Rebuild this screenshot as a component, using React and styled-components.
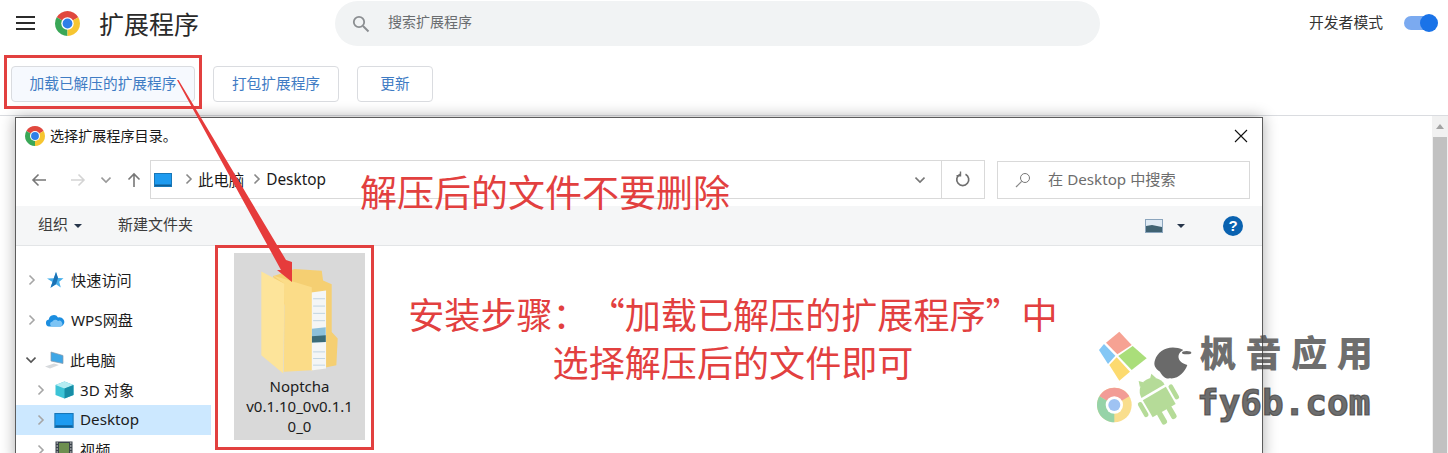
import React from 'react';
import styled, { createGlobalStyle } from 'styled-components';

const CJK = `"Noto Sans CJK SC", "Noto Sans", sans-serif`;
const LATIN = `"Noto Sans", "Noto Sans CJK SC", sans-serif`;
const RED = '#e2403f';

const GlobalStyle = createGlobalStyle`
  html, body { margin: 0; padding: 0; background: #fff; }
  body { width: 1448px; height: 453px; overflow: hidden; font-family: ${CJK}; }
`;

const Page = styled.div`
  position: relative;
  width: 1448px;
  height: 453px;
  overflow: hidden;
  background: #fff;
`;

const Header = styled.header`
  display: flex;
  align-items: center;
  height: 46px;
  padding: 0 10px 0 16px;
`;

const Burger = styled.div`
  display: flex;
  flex-direction: column;
  gap: 3.5px;
  width: 19px;
  margin-right: 20px;
  i { display: block; height: 2.5px; background: #2b2b2b; }
`;

const Title = styled.h1`
  margin: 0 0 0 19px;
  width: 236px;
  font-size: 25px;
  font-weight: 400;
  color: #2a2a2a;
  white-space: nowrap;
`;

const SearchPill = styled.div`
  display: flex;
  align-items: center;
  width: 765px;
  height: 45px;
  margin-top: 1px;
  padding-left: 17px;
  box-sizing: border-box;
  background: #f1f3f4;
  border-radius: 23px;
  font-size: 14px;
  color: #6a6d70;
  span { margin: -6px 0 0 18px; }
`;

const DevMode = styled.div`
  display: flex;
  align-items: center;
  margin-left: 209px;
  font-size: 14.8px;
  color: #333;
  white-space: nowrap;
  span { margin-top: -4px; }
`;

const Toggle = styled.div`
  position: relative;
  width: 26px;
  height: 14px;
  margin-left: 21px;
  background: #7baaf0;
  border-radius: 7px;
  &::after {
    content: '';
    position: absolute;
    left: 16px;
    top: -2px;
    width: 18px;
    height: 18px;
    border-radius: 50%;
    background: #1a73e8;
  }
`;

const Toolbar = styled.div`
  display: flex;
  align-items: center;
  gap: 18px;
  height: 70px;
  padding: 7px 0 0 11px;
  box-sizing: border-box;
  border-bottom: 1px solid #dadce0;
`;

const ActionButton = styled.div`
  display: flex;
  align-items: center;
  justify-content: center;
  width: ${p => p.$w}px;
  height: 36px;
  padding-bottom: 4px;
  box-sizing: border-box;
  border: 1px solid #dadce0;
  border-radius: 4px;
  background: ${p => (p.$active ? '#f6f9fe' : '#fff')};
  color: #3f7cc4;
  font-size: 14.7px;
  white-space: nowrap;
`;

const Scrollbar = styled.div`
  position: absolute;
  right: 0;
  top: 116px;
  bottom: 0;
  width: 16px;
  display: flex;
  flex-direction: column;
  align-items: center;
  background: #f1f1f1;
  &::before {
    content: '';
    margin: 8px 0 8px;
    border-left: 4px solid transparent;
    border-right: 4px solid transparent;
    border-bottom: 5px solid #a3a3a3;
  }
  &::after {
    content: '';
    flex: 1;
    width: 14px;
    background: #c1c1c1;
  }
`;

const Dialog = styled.section`
  position: absolute;
  left: 15px;
  top: 117px;
  width: 1248px;
  height: 345px;
  box-sizing: border-box;
  background: #fff;
  border: 1px solid #5c5c5c;
  box-shadow: 0 0 14px rgba(0, 0, 0, 0.32);
  display: flex;
  flex-direction: column;
`;

const DialogTitle = styled.div`
  display: flex;
  align-items: center;
  height: 36px;
  padding: 0 14px 0 9px;
  font-size: 14.1px;
  color: #1a1a1a;
  span { margin: -2px 0 0 5px; flex: 1; }
`;

const AddressRow = styled.div`
  display: flex;
  align-items: center;
  height: 39px;
  margin-top: 6px;
  padding-left: 15px;
`;

const NavIcons = styled.div`
  display: flex;
  align-items: center;
  width: 119px;
`;

const Spacer = styled.div`
  width: ${p => p.$w}px;
  flex-shrink: 0;
`;

const AddressBox = styled.div`
  display: flex;
  align-items: center;
  width: 835px;
  height: 39px;
  box-sizing: border-box;
  border: 1px solid #d9d9d9;
  font-family: ${LATIN};
  font-size: 15.4px;
  color: #1a1a1a;
  padding-left: 3px;
`;

const Crumb = styled.span`
  margin: 0 0 0 ${p => p.$gap}px;
  white-space: nowrap;
`;

const AddressEnd = styled.div`
  display: flex;
  align-items: center;
  justify-content: center;
  width: ${p => p.$w}px;
  height: 100%;
  border-left: ${p => (p.$line ? '1px solid #d9d9d9' : 'none')};
`;

const Grow = styled.div`
  flex: 1;
`;

const FileSearch = styled.div`
  display: flex;
  align-items: center;
  width: 253px;
  height: 38px;
  margin-left: 12px;
  padding-left: 17px;
  box-sizing: border-box;
  border: 1px solid #d9d9d9;
  font-family: ${LATIN};
  font-size: 15.2px;
  color: #6d6d6d;
  white-space: nowrap;
  span { margin: -4px 0 0 17px; }
`;

const CommandBar = styled.div`
  display: flex;
  align-items: center;
  height: 39px;
  margin-top: 7px;
  padding: 0 19px 0 22px;
  background: #f5f6f7;
  border-bottom: 1px solid #e3e5e7;
  font-size: 15px;
  color: #3b3b3b;
  span { margin-top: -4px; }
`;

const Caret = styled.i`
  display: inline-block;
  margin-left: ${p => p.$ml}px;
  border-left: 4px solid transparent;
  border-right: 4px solid transparent;
  border-top: 4.5px solid #26354a;
`;

const NewFolder = styled.span`
  margin-left: 36px;
  flex: 1;
`;

const HelpDot = styled.div`
  display: flex;
  align-items: center;
  justify-content: center;
  width: 20px;
  height: 20px;
  margin-left: 38px;
  border-radius: 50%;
  background: #0a62b0;
  color: #fff;
  font: 700 15px "Liberation Sans", sans-serif;
`;

const Body = styled.div`
  display: flex;
  flex: 1;
  min-height: 0;
`;

const Sidebar = styled.nav`
  width: 195px;
  padding-top: 14px;
  flex-shrink: 0;
`;

const TreeRow = styled.div`
  display: flex;
  align-items: center;
  height: ${p => p.$h}px;
  margin-top: ${p => p.$mt || 0}px;
  padding-left: ${p => p.$indent}px;
  background: ${p => (p.$selected ? '#cce8ff' : 'transparent')};
  font-family: ${LATIN};
  font-size: 15.2px;
  color: #1c1c1c;
  white-space: nowrap;
  svg:first-child { flex-shrink: 0; }
  span { margin: -3px 0 0 6px; }
`;

const IconSlot = styled.div`
  display: flex;
  justify-content: center;
  width: 20px;
  margin-left: 8px;
`;

const FileArea = styled.div`
  flex: 1;
  padding: 7px 0 0 23px;
`;

const FileTile = styled.div`
  width: 131px;
  height: 187px;
  background: #d9d9d9;
  display: flex;
  flex-direction: column;
  align-items: center;
  padding-top: 14px;
  box-sizing: border-box;
`;

const FileName = styled.div`
  margin-top: -1px;
  text-align: center;
  font-family: ${LATIN};
  font-size: 15px;
  line-height: 20px;
  color: #1c1c1c;
`;

const Highlight = styled.div`
  position: absolute;
  left: ${p => p.$x}px;
  top: ${p => p.$y}px;
  width: ${p => p.$w}px;
  height: ${p => p.$h}px;
  box-sizing: border-box;
  border: 3px solid ${RED};
  pointer-events: none;
`;

const ArrowLayer = styled.svg`
  position: absolute;
  left: 0;
  top: 0;
  pointer-events: none;
`;

const Note = styled.div`
  position: absolute;
  left: ${p => p.$x}px;
  top: ${p => p.$y}px;
  width: ${p => p.$w}px;
  text-align: center;
  font-size: ${p => p.$size}px;
  line-height: 50px;
  color: ${RED};
  white-space: nowrap;
  text-spacing-trim: space-all;
`;

const Watermark = styled.div`
  position: absolute;
  left: 1080px;
  top: 320px;
  width: 300px;
  height: 133px;
  pointer-events: none;
`;

const WatermarkCn = styled.div`
  position: absolute;
  left: 120px;
  top: 8px;
  font-size: 36px;
  line-height: 46px;
  font-weight: 900;
  letter-spacing: 9.6px;
  color: rgba(70, 70, 70, 0.8);
  white-space: nowrap;
`;

const WatermarkEn = styled.div`
  position: absolute;
  left: 117px;
  top: 60px;
  font-family: "DejaVu Sans Mono", monospace;
  font-size: 36px;
  line-height: 46px;
  font-weight: 700;
  -webkit-text-stroke: 1.2px rgba(70, 70, 70, 0.8);
  color: rgba(70, 70, 70, 0.8);
  white-space: nowrap;
`;

const WatermarkIcons = styled.svg`
  position: absolute;
  left: 0;
  top: 0;
`;

const ChromeLogo = ({ size }) => (
  <svg width={size} height={size} viewBox="0 0 24 24">
    <path d="M12 12L22.39 6A12 12 0 0 0 1.61 6Z" fill="#e0483e" />
    <path d="M12 12L1.61 6A12 12 0 0 0 12 24Z" fill="#3aa757" />
    <path d="M12 12L12 24A12 12 0 0 0 22.39 6Z" fill="#f6c530" />
    <circle cx="12" cy="12" r="6" fill="#fff" />
    <circle cx="12" cy="12" r="4.7" fill="#2f7fe8" />
  </svg>
);

const Chevron = ({ dir = 'right', color = '#a6a6a6' }) => (
  <svg width="10" height="12" viewBox="0 0 10 12">
    {dir === 'right'
      ? <path d="M2.5 1.5L7 6L2.5 10.5" fill="none" stroke={color} strokeWidth="1.6" />
      : <path d="M0.5 3.5L5 8L9.5 3.5" fill="none" stroke={color} strokeWidth="1.6" />}
  </svg>
);

const MonitorIcon = ({ w = 18, h = 14 }) => (
  <svg width={w} height={h} viewBox="0 0 18 14">
    <rect x="0.5" y="0.5" width="17" height="13" fill="#1e9bf0" stroke="#1877b8" />
    <rect x="1" y="11.5" width="16" height="1.5" fill="#0f5f96" />
  </svg>
);

const ArrowIcon = ({ color, flip, up }) => (
  <svg width="16" height="16" viewBox="0 0 16 16">
    <g transform={up ? 'rotate(90 8 8)' : flip ? 'rotate(180 8 8)' : undefined}>
      <path d="M15 8H2M7.5 2.5L2 8L7.5 13.5" fill="none" stroke={color} strokeWidth="1.6" />
    </g>
  </svg>
);

const FolderArt = () => (
  <svg width="83" height="110" viewBox="770 345 250 330">
    <path d="M815 372L880 350L962 356L966 385L992 396V540L1010 560L1006 640L930 656Z" fill="#f5cf72" />
    <path d="M930 421L975 415V650L930 656Z" fill="#f4f6f6" />
    <path d="M936 440H972M936 462H972M936 484H972M936 506H972M936 600H972M936 620H972M936 640H972" stroke="#a9c4d6" strokeWidth="2" />
    <path d="M932 530L974 526V570L932 572Z" fill="#8cc0da" />
    <path d="M932 553L974 550V570L932 572Z" fill="#3b6b78" />
    <path d="M815 370L932 405V655L848 660L850 395Z" fill="#fbdc88" />
    <path d="M780 358L850 395L846 665L780 610Z" fill="#fde49a" />
  </svg>
);

const StarIcon = () => (
  <svg width="18" height="18" viewBox="0 0 18 18">
    <path d="M10 1L12 7L17.5 7.3L13.2 10.8L14.8 16.5L10 13.3L4.5 16.8L6.5 11L1 7.5L7.8 7.2Z" fill="#47b0ec" />
    <path d="M10 1L12 7L10 13.3L4.5 16.8L6.5 11Z" fill="#1b72b5" />
  </svg>
);

const CloudIcon = () => (
  <svg width="20" height="14" viewBox="0 0 20 14">
    <path d="M4 13.5A3.5 3.5 0 0 1 3.8 6.6A5 5 0 0 1 13 4.4A4.6 4.6 0 0 1 16 13.5Z" fill="#1c8ee0" />
    <path d="M7 13.5A2.6 2.6 0 0 1 7.4 8.4A3.4 3.4 0 0 1 13 8A2.8 2.8 0 0 1 15.5 13.5Z" fill="#7cc4f5" />
  </svg>
);

const PcIcon = () => (
  <svg width="20" height="18" viewBox="0 0 20 18">
    <path d="M7 1L19 4.5V12.5L7 10Z" fill="#3fa7e6" stroke="#8a9aa8" strokeWidth="0.7" />
    <path d="M1 15.5L10 12.5L15 14L6 17.5Z" fill="#d7dadd" />
  </svg>
);

const CubeIcon = () => (
  <svg width="19" height="18" viewBox="0 0 19 18">
    <path d="M9.5 0.5L18.5 4V14L9.5 17.5L0.5 14V4Z" fill="#3cc3d6" />
    <path d="M9.5 0.5L18.5 4L9.5 7.5L0.5 4Z" fill="#b5ecf2" />
    <path d="M9.5 7.5L18.5 4V14L9.5 17.5Z" fill="#178da6" />
  </svg>
);

const VideoIcon = () => (
  <svg width="18" height="18" viewBox="0 0 18 18">
    <rect x="0.5" y="0.5" width="17" height="17" fill="#39424a" />
    <rect x="4" y="2" width="10" height="14" fill="#6d8f50" />
    <path d="M1.5 2H3M1.5 5H3M1.5 8H3M1.5 11H3M1.5 14H3M15 2H16.5M15 5H16.5M15 8H16.5M15 11H16.5M15 14H16.5" stroke="#ddd" strokeWidth="1.2" />
  </svg>
);

const TreeItem = ({ h, mt, indent, chevron = 'right', chevronColor, selected, icon, label }) => (
  <TreeRow $h={h} $mt={mt} $indent={indent} $selected={selected}>
    <Chevron dir={chevron} color={chevronColor} />
    <IconSlot>{icon}</IconSlot>
    <span>{label}</span>
  </TreeRow>
);

export default function App() {
  return (
    <Page>
      <GlobalStyle />
      <Header>
        <Burger><i /><i /><i /></Burger>
        <ChromeLogo size={25} />
        <Title>扩展程序</Title>
        <SearchPill>
          <svg width="18" height="18" viewBox="0 0 18 18">
            <circle cx="7" cy="7" r="5.2" fill="none" stroke="#8b8e91" strokeWidth="1.8" />
            <path d="M11 11L16.5 16.5" stroke="#8b8e91" strokeWidth="2" />
          </svg>
          <span>搜索扩展程序</span>
        </SearchPill>
        <DevMode><span>开发者模式</span><Toggle /></DevMode>
      </Header>
      <Toolbar>
        <ActionButton $w={184} $active>加载已解压的扩展程序</ActionButton>
        <ActionButton $w={126}>打包扩展程序</ActionButton>
        <ActionButton $w={76}>更新</ActionButton>
      </Toolbar>
      <Scrollbar />

      <Dialog>
        <DialogTitle>
          <ChromeLogo size={20} />
          <span>选择扩展程序目录。</span>
          <svg width="14" height="14" viewBox="0 0 14 14">
            <path d="M1 1L13 13M13 1L1 13" stroke="#111" strokeWidth="1.1" />
          </svg>
        </DialogTitle>
        <AddressRow>
          <NavIcons>
            <ArrowIcon color="#777" />
            <Spacer $w={23} />
            <ArrowIcon color="#d4d4d4" flip />
            <Spacer $w={15} />
            <Chevron dir="down" color="#9a9a9a" />
            <Spacer $w={15} />
            <ArrowIcon color="#777" up />
          </NavIcons>
          <AddressBox>
            <MonitorIcon />
            <Crumb $gap={12}><Chevron color="#888" /></Crumb>
            <Crumb $gap={4}>此电脑</Crumb>
            <Crumb $gap={8}><Chevron color="#888" /></Crumb>
            <Crumb $gap={4}>Desktop</Crumb>
            <Grow />
            <AddressEnd $w={42}>
              <Chevron dir="down" color="#777" />
            </AddressEnd>
            <AddressEnd $w={42} $line>
              <svg width="16" height="17" viewBox="0 0 16 17">
                <path d="M5 3.2A6 6 0 1 0 10.5 3.2" fill="none" stroke="#6f6f6f" strokeWidth="1.7" />
                <path d="M5.5 0.5V4.7H1.5" fill="none" stroke="#6f6f6f" strokeWidth="1.4" />
              </svg>
            </AddressEnd>
          </AddressBox>
          <FileSearch>
            <svg width="16" height="16" viewBox="0 0 16 16">
              <circle cx="10" cy="6" r="4.5" fill="none" stroke="#777" strokeWidth="1" />
              <path d="M6.7 9.3L1 15" stroke="#888" strokeWidth="1.2" />
            </svg>
            <span>在 Desktop 中搜索</span>
          </FileSearch>
        </AddressRow>
        <CommandBar>
          <span>组织</span><Caret $ml={6} />
          <NewFolder>新建文件夹</NewFolder>
          <svg width="18" height="14" viewBox="0 0 18 14">
            <rect x="0.5" y="0.5" width="17" height="13" fill="#dfeaf4" stroke="#8ba5bd" />
            <path d="M1 7L7 6L17 8V13H1Z" fill="#3f6272" />
          </svg>
          <Caret $ml={14} />
          <HelpDot>?</HelpDot>
        </CommandBar>
        <Body>
          <Sidebar>
            <TreeItem h={40} indent={11} icon={<StarIcon />} label="快速访问" />
            <TreeItem h={40} indent={11} icon={<CloudIcon />} label="WPS网盘" />
            <TreeItem h={30} mt={5} indent={10} chevron="down" chevronColor="#555" icon={<PcIcon />} label="此电脑" />
            <TreeItem h={30} indent={20} icon={<CubeIcon />} label="3D 对象" />
            <TreeItem h={30} indent={20} selected icon={<MonitorIcon w={20} h={15} />} label="Desktop" />
            <TreeItem h={30} indent={20} icon={<VideoIcon />} label="视频" />
          </Sidebar>
          <FileArea>
            <FileTile>
              <FolderArt />
              <FileName>Noptcha<br />v0.1.10_0v0.1.1<br />0_0</FileName>
            </FileTile>
          </FileArea>
        </Body>
      </Dialog>

      <Watermark>
        <WatermarkIcons width="300" height="133" viewBox="0 0 900 399">
          <g opacity="0.75">
            <path d="M118 35L155 75L112 103L78 68Z" fill="#f4836f" />
            <path d="M72 72L106 107L84 132L57 90Z" fill="#5bb5f2" />
            <path d="M158 78L200 115L155 150L115 108Z" fill="#8ed34e" />
            <path d="M110 112L150 155L118 182L88 135Z" fill="#fbce3f" />
          </g>
          <path d="M225 120C235 90 270 72 310 90C290 100 288 125 322 135C315 155 295 178 270 175C255 178 245 165 240 155C225 145 220 135 225 120Z" fill="#6a6a6a" />
          <ellipse cx="320" cy="98" rx="14" ry="5" fill="#6a6a6a" />
          <g opacity="0.75">
            <circle cx="103" cy="255" r="52" fill="#f8d468" />
            <path d="M103 255L148 229A52 52 0 0 0 58 229Z" fill="#ee7b73" />
            <path d="M103 255L58 229A52 52 0 0 0 103 307Z" fill="#74c58c" />
            <circle cx="103" cy="255" r="26" fill="#fff" />
            <circle cx="103" cy="255" r="18" fill="#7fb0f0" />
            <g fill="#9dd076" transform="rotate(-30 240 250)">
              <path d="M200 208A40 40 0 0 1 280 208Z" />
              <path d="M212 178L222 176L228 170L218 160ZM268 178L258 176L252 170L262 160Z" />
              <path d="M200 216H280V275H200Z" />
              <rect x="180" y="216" width="14" height="50" rx="7" />
              <rect x="286" y="216" width="14" height="50" rx="7" />
              <rect x="215" y="270" width="17" height="42" rx="7" />
              <rect x="248" y="270" width="17" height="42" rx="7" />
            </g>
          </g>
        </WatermarkIcons>
        <WatermarkCn>枫音应用</WatermarkCn>
        <WatermarkEn>fy6b.com</WatermarkEn>
      </Watermark>

      <Note $x={330} $y={166} $w={430} $size={37}>解压后的文件不要删除</Note>
      <Note $x={383} $y={288} $w={700} $size={36.1}>安装步骤：“加载已解压的扩展程序”中</Note>
      <Note $x={383} $y={336} $w={700} $size={36.1}>选择解压后的文件即可</Note>

      <Highlight $x={4} $y={55} $w={198} $h={54} />
      <Highlight $x={215} $y={245} $w={159} $h={205} />

      <ArrowLayer width="1448" height="453" viewBox="0 0 1448 453">
        <path d="M177 80L178.5 80L286 260L292 262L292 282L277 270L281 270Z" fill="#e63b3b" />
      </ArrowLayer>
    </Page>
  );
}
